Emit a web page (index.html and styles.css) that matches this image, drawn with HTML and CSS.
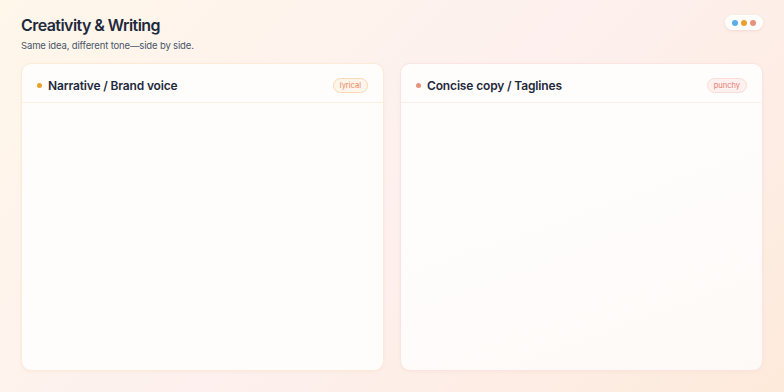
FILE: index.html
```html
<html>
    <head>
        <title>Creativity &amp; Writing</title>
        <meta name="viewport" content="width=device-width, initial-scale=1.0">
        <link rel="stylesheet" href="styles.css">
    </head>
    <body>
        <div class="page">
            <div class="top">
                <div class="heading">
                    <h1>Creativity &amp; Writing</h1>
                    <p>Same idea, different tone—side by side.</p>
                </div>
                <div class="dots">
                    <span class="dot blue"></span>
                    <span class="dot orange"></span>
                    <span class="dot salmon"></span>
                </div>
            </div>
            <div class="panels">
                <div class="panel warm">
                    <div class="panel-head">
                        <span class="bullet"></span>
                        <span class="panel-title">Narrative / Brand voice</span>
                        <span class="tag">lyrical</span>
                    </div>
                    <div class="panel-body"></div>
                </div>
                <div class="panel rose">
                    <div class="panel-head">
                        <span class="bullet"></span>
                        <span class="panel-title">Concise copy / Taglines</span>
                        <span class="tag">punchy</span>
                    </div>
                    <div class="panel-body"></div>
                </div>
            </div>
        </div>
    </body>
</html>
```

FILE: styles.css
```css
* {
    font-family: Inter, "Noto Sans", sans-serif;
    box-sizing: border-box;
}

html, body {
    margin: 0;
    padding: 0;
    width: 100%;
    height: 100%;
}

body {
    background: linear-gradient(135deg, #fff7ea 0%, #fdf0ee 50%, #fdeadb 100%);
}

.page {
    height: 100%;
    display: flex;
    flex-direction: column;
    padding: 15px 21px 21px 21px;
}

.top {
    display: flex;
    justify-content: space-between;
    align-items: flex-start;
}

.heading h1 {
    margin: 0;
    font-size: 16px;
    line-height: 20px;
    font-weight: 600;
    color: #1e293b;
    letter-spacing: -0.035em;
}

.heading p {
    margin: 4px 0 0 0;
    font-size: 9.5px;
    line-height: 14px;
    color: #475569;
    letter-spacing: -0.15px;
}

.dots {
    display: flex;
    align-items: center;
    gap: 3px;
    height: 15px;
    padding: 0 7px;
    background-color: #fffefd;
    border-radius: 999px;
    box-shadow: 0 1px 3px rgba(226, 160, 140, 0.25);
}

.dot {
    width: 6px;
    height: 6px;
    border-radius: 50%;
}

.dot.blue { background-color: #5aaee8; }
.dot.orange { background-color: #eaa02e; }
.dot.salmon { background-color: #e5937f; }

.panels {
    flex: 1;
    display: grid;
    grid-template-columns: 1fr 1fr;
    gap: 16px;
    margin-top: 10px;
}

.panel {
    display: flex;
    flex-direction: column;
    border-radius: 10px;
    border: 1px solid #fcebd6;
    background: #fffdfb;
    box-shadow: 0 1px 3px rgba(230, 180, 150, 0.12);
}

.panel.rose {
    border-color: #fbe4e1;
    background: linear-gradient(160deg, #fffdfc 40%, #fdf9f7 100%);
}

.panel-head {
    display: flex;
    align-items: center;
    padding: 14px 15px 9px 15px;
    border-bottom: 1px solid #fdf0e1;
}

.rose .panel-head {
    border-bottom-color: #fdeeea;
}

.bullet {
    width: 5px;
    height: 5px;
    border-radius: 50%;
    background-color: #eaa02e;
    margin-right: 6px;
}

.rose .bullet {
    background-color: #e5937f;
}

.panel-title {
    flex: 1;
    font-size: 12px;
    font-weight: 600;
    color: #1e293b;
    letter-spacing: -0.15px;
}

.tag {
    height: 15px;
    line-height: 13px;
    padding: 0 6px;
    font-size: 7.5px;
    border-radius: 999px;
    color: #e4875f;
    background-color: #fff5ea;
    border: 1px solid #fbd9b4;
}

.rose .tag {
    color: #e07a6b;
    background-color: #fff1ef;
    border-color: #fbdcd6;
}

.panel-body {
    flex: 1;
}
```
